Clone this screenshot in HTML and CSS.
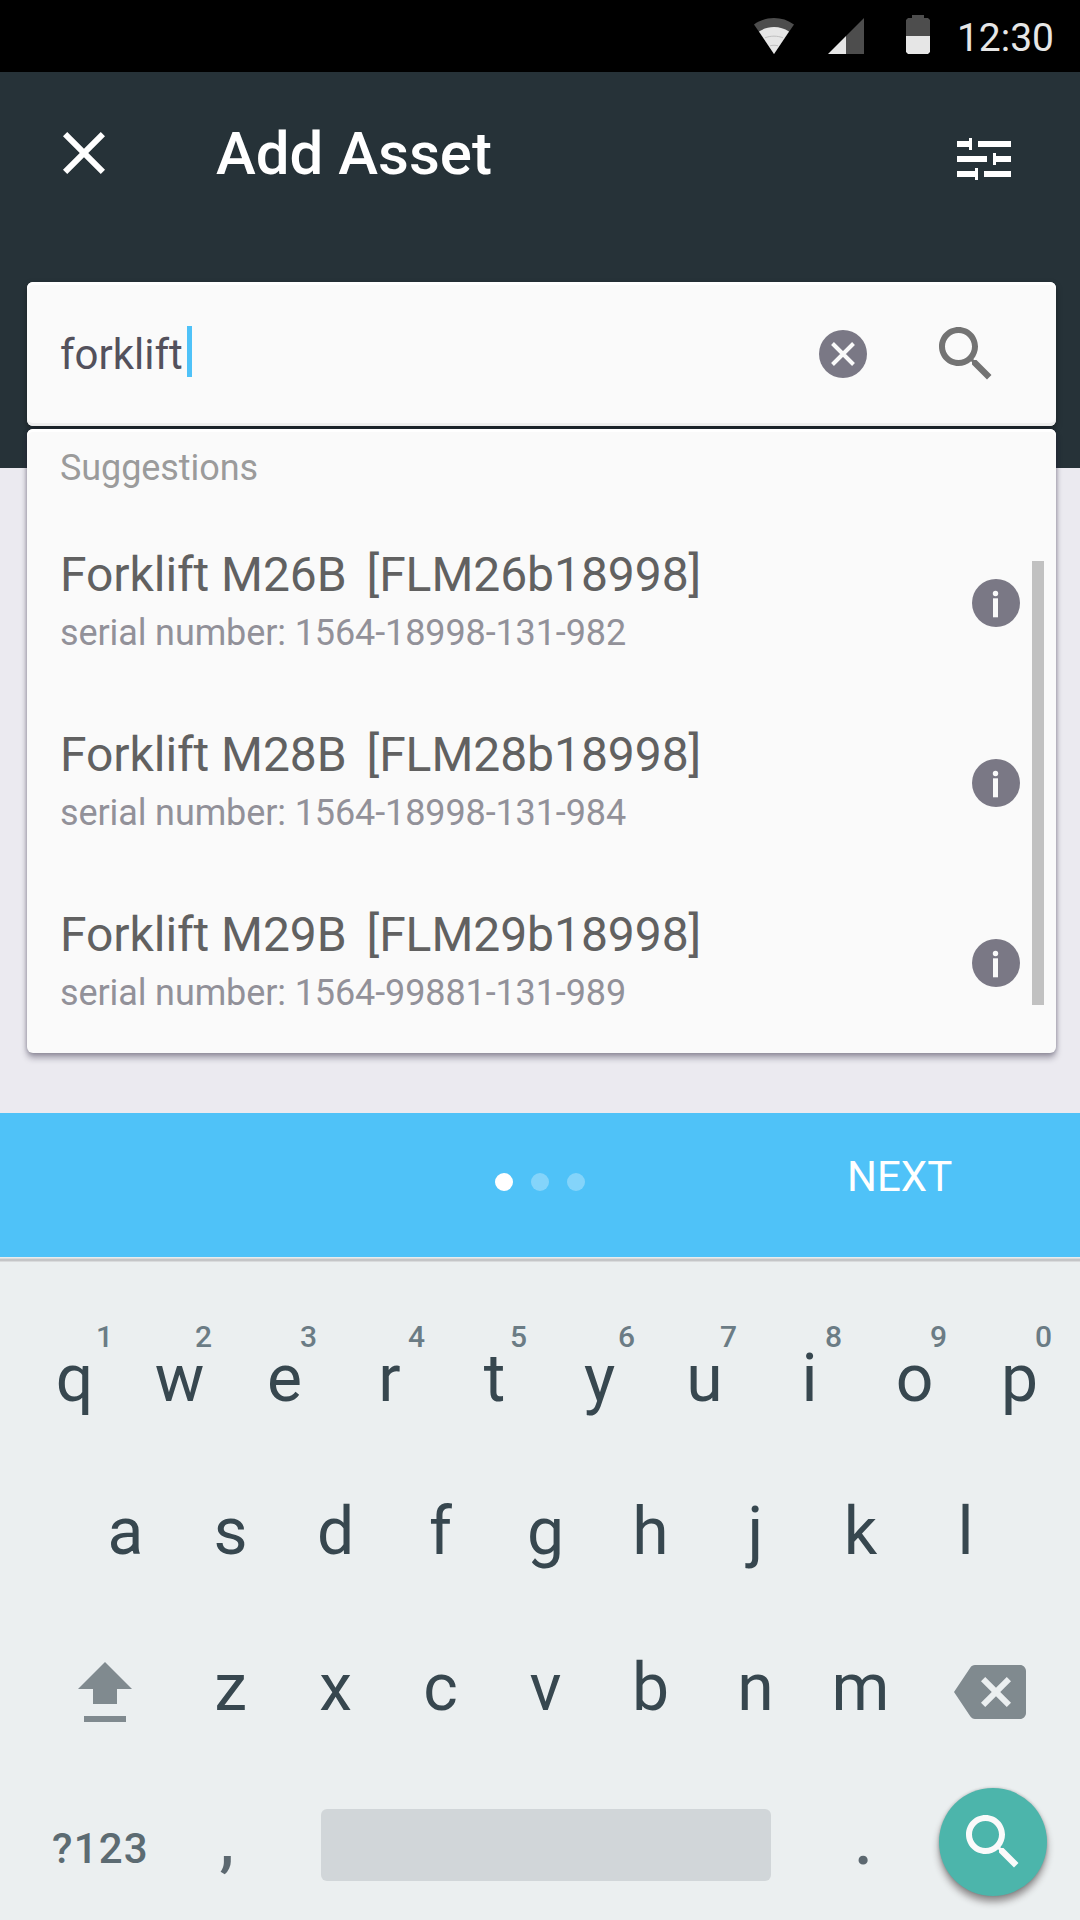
FILE: index.html
```html
<!DOCTYPE html>
<html lang="en">
<head>
<meta charset="utf-8">
<title>Add Asset</title>
<link rel="stylesheet" href="styles.css">
</head>
<body>
<div class="status-bar">
  <svg class="status-wifi" width="42" height="36" viewBox="0 0 42 36">
    <path class="dim" d="M1 6.4C7 2.200 13.800 0 21 0s14 2.200 20 6.400L21 36z"/>
    <path class="lit" d="M6 13.500C10.500 10.600 15.500 9 21 9s10.500 1.600 15 4.500L21 36z"/>
    <path class="arc" d="M12 19.800c5.500-2.200 12.500-2.200 18 0M17 27.800c2.500-.7 5.500-.7 8 0"/>
  </svg>
  <svg class="status-signal" width="36" height="36" viewBox="0 0 36 36">
    <path class="dim" d="M36 0v36H18V18z"/>
    <path class="lit" d="M18 18v18H0z"/>
  </svg>
  <svg class="status-battery" width="24" height="39" viewBox="0 0 24 39">
    <path class="dim" d="M6 0h12v3h4l2 2v16H0V5l2-2h4z"/>
    <path class="lit" d="M0 21h24v16l-2 2H2l-2-2z"/>
  </svg>
  <span class="clock">12:30</span>
</div>

<main class="screen">
  <header class="toolbar">
    <svg class="icon" viewBox="0 0 24 24"><path d="M19 6.410L17.590 5 12 10.590 6.410 5 5 6.410 10.590 12 5 17.590 6.410 19 12 13.410 17.590 19 19 17.590 13.410 12z"/></svg>
    <h1 class="title">Add Asset</h1>
    <svg class="tune" width="54" height="42" viewBox="0 0 54 42">
      <path d="M0 3h12V0h3v12h-3V9H0zM21 3h33v6H21zM0 18h30v6H0zM36 15h3v3h15v6H39v3h-3zM0 33h18v-3h3v12h-3v-3H0zM27 33h27v6H27z"/>
    </svg>
  </header>

  <div class="card search">
    <span class="query">forklift</span><span class="caret"></span>
    <svg class="clear" width="48" height="48" viewBox="0 0 48 48">
      <circle cx="24" cy="24" r="24"/>
      <path d="M13.500 13.500l21 21M34.500 13.500l-21 21"/>
    </svg>
    <svg class="icon search-icon" viewBox="0 0 24 24"><path d="M15.500 14h-.79l-.28-.27C15.410 12.590 16 11.110 16 9.500 16 5.910 13.090 3 9.500 3S3 5.910 3 9.500 5.910 16 9.500 16c1.610 0 3.090-.59 4.230-1.570l.27.28v.79l5 4.990L20.490 19l-4.990-5zm-6 0C7.010 14 5 11.990 5 9.500S7.010 5 9.500 5 14 7.010 14 9.500 11.990 14 9.500 14z"/></svg>
  </div>

  <div class="card suggestions">
    <div class="results">
      <h2 class="label">Suggestions</h2>
      <div class="result">
        <div>
          <div class="name">Forklift M26B <span class="tag">[FLM26b18998]</span></div>
          <div class="serial">serial number: 1564-18998-131-982</div>
        </div>
        <svg class="info" width="48" height="48" viewBox="0 0 48 48"><circle class="disc" cx="24" cy="24" r="24"/><circle cx="23.500" cy="14.500" r="2.700"/><path d="M21 19.300h5v19h-5z"/></svg>
      </div>
      <div class="result">
        <div>
          <div class="name">Forklift M28B <span class="tag">[FLM28b18998]</span></div>
          <div class="serial">serial number: 1564-18998-131-984</div>
        </div>
        <svg class="info" width="48" height="48" viewBox="0 0 48 48"><circle class="disc" cx="24" cy="24" r="24"/><circle cx="23.500" cy="14.500" r="2.700"/><path d="M21 19.300h5v19h-5z"/></svg>
      </div>
      <div class="result">
        <div>
          <div class="name">Forklift M29B <span class="tag">[FLM29b18998]</span></div>
          <div class="serial">serial number: 1564-99881-131-989</div>
        </div>
        <svg class="info" width="48" height="48" viewBox="0 0 48 48"><circle class="disc" cx="24" cy="24" r="24"/><circle cx="23.500" cy="14.500" r="2.700"/><path d="M21 19.300h5v19h-5z"/></svg>
      </div>
    </div>
    <div class="scrollbar"></div>
  </div>
</main>

<nav class="stepper">
  <div class="dots"><span class="dot active"></span><span class="dot"></span><span class="dot"></span></div>
  <span class="next">NEXT</span>
</nav>

<div class="keyboard">
  <div class="row row-top">
    <span class="key">q<sup class="hint one">1</sup></span>
    <span class="key">w<sup class="hint">2</sup></span>
    <span class="key">e<sup class="hint">3</sup></span>
    <span class="key">r<sup class="hint far">4</sup></span>
    <span class="key">t<sup class="hint">5</sup></span>
    <span class="key">y<sup class="hint far">6</sup></span>
    <span class="key">u<sup class="hint">7</sup></span>
    <span class="key">i<sup class="hint">8</sup></span>
    <span class="key">o<sup class="hint">9</sup></span>
    <span class="key">p<sup class="hint">0</sup></span>
  </div>
  <div class="row row-home">
    <span class="key">a</span><span class="key">s</span><span class="key">d</span><span class="key">f</span><span class="key">g</span><span class="key">h</span><span class="key">j</span><span class="key">k</span><span class="key">l</span>
  </div>
  <div class="row row-low">
    <svg class="shift" width="54" height="60" viewBox="0 0 54 60"><path d="M27 0l27 27H39v15H15V27H0zM6 54h42v6H6z"/></svg>
    <span class="key">z</span><span class="key">x</span><span class="key">c</span><span class="key">v</span><span class="key">b</span><span class="key">n</span><span class="key">m</span>
    <svg class="icon backspace" viewBox="0 0 24 24"><path d="M22 3H7c-.69 0-1.230.35-1.590.88L0 12l5.410 8.110c.36.53.9.89 1.590.89h15c1.100 0 2-.9 2-2V5c0-1.100-.9-2-2-2zm-3 12.590L17.590 17 14 13.410 10.410 17 9 15.590 12.590 12 9 8.410 10.410 7 14 10.590 17.590 7 19 8.410 15.410 12 19 15.590z"/></svg>
  </div>
  <div class="row row-bottom">
    <span class="symbols">?123</span>
    <span class="punct comma">,</span>
    <span class="space"></span>
    <span class="punct period">.</span>
    <span class="go"><svg class="icon" viewBox="0 0 24 24"><path d="M15.500 14h-.79l-.28-.27C15.410 12.590 16 11.110 16 9.500 16 5.910 13.090 3 9.500 3S3 5.910 3 9.500 5.910 16 9.500 16c1.610 0 3.090-.59 4.230-1.570l.27.28v.79l5 4.990L20.490 19l-4.990-5zm-6 0C7.010 14 5 11.990 5 9.500S7.010 5 9.500 5 14 7.010 14 9.500 11.990 14 9.500 14z"/></svg></span>
  </div>
</div>
</body>
</html>
```

FILE: styles.css
```css
* { box-sizing: border-box; }

body {
  margin: 0;
  width: 1080px;
  height: 1920px;
  overflow: hidden;
  display: flex;
  flex-direction: column;
  font-family: Roboto, "Liberation Sans", sans-serif;
  background: #ebeaf0;
}

svg { display: block; flex: none; }
.icon { width: 72px; height: 72px; }

/* Status bar */
.status-bar {
  height: 72px;
  flex: none;
  display: flex;
  align-items: center;
  justify-content: flex-end;
  padding-right: 26px;
  background: #000;
}
.status-bar .dim { fill: #4d4d4d; }
.status-bar .lit { fill: #e6e6e6; }
.status-bar .arc { fill: none; stroke: #b5b5b5; stroke-width: 0.8; }
.status-wifi { margin-right: 33px; }
.status-signal { margin-right: 42px; }
.status-battery { margin: 0 0 3px; }
.clock {
  width: 124px;
  text-align: right;
  color: #e6e6e6;
  font-size: 39px;
  line-height: 72px;
  padding-top: 3px;
}

/* Header and search */
.screen {
  height: 1041px;
  flex: none;
  padding: 0 24px 0 27px;
  background: linear-gradient(#263238 396px, #ebeaf0 396px);
}
.toolbar {
  height: 162px;
  margin-bottom: 48px;
  padding: 0 45px 0 21px;
  display: flex;
  align-items: center;
  fill: #fff;
}
.title {
  flex: 1;
  margin: 2px 0 0 96px;
  font-size: 60px;
  font-weight: 500;
  line-height: 162px;
  color: #fff;
}
.tune { margin-top: 12px; }

.card {
  display: flex;
  border-radius: 6px;
  background: #fafafa;
}
.search {
  height: 144px;
  align-items: center;
  padding: 0 54px 0 33px;
  box-shadow: inset 0 3px 0 #fff, inset 0 -3px 0 #eee, 0 3px 6px rgba(0, 0, 0, 0.35);
}
.query {
  margin-top: 2px;
  font-size: 42px;
  line-height: 144px;
  color: #53515c;
}
.caret {
  width: 5px;
  height: 51px;
  margin: 0 auto 5px 4px;
  background: #4fc2f8;
}
.clear { fill: #7a7885; stroke: none; }
.clear path { stroke: #fafafa; stroke-width: 4; }
.search-icon { margin-left: 63px; fill: #737373; }

.suggestions {
  height: 624px;
  margin-top: 3px;
  box-shadow: inset 0 3px 0 #fff, 0 5px 6px rgba(30, 25, 50, 0.36), 0 0 4px rgba(30, 25, 50, 0.28);
}
.results { flex: 1; padding-left: 33px; }
.label {
  margin: 0;
  padding-top: 9px;
  height: 84px;
  font-size: 36px;
  font-weight: 400;
  line-height: 60px;
  letter-spacing: -0.08px;
  color: #9b9b9b;
}
.result {
  height: 180px;
  display: flex;
  justify-content: space-between;
  padding-top: 30px;
}
.name {
  font-size: 48px;
  line-height: 64px;
  letter-spacing: -0.06px;
  color: #616161;
  white-space: nowrap;
}
.tag { margin-left: 8px; }
.serial {
  margin-top: 2px;
  font-size: 36px;
  line-height: 48px;
  letter-spacing: -0.11px;
  color: #929199;
}
.info { margin-top: 36px; fill: #fafafa; }
.info .disc { fill: #7a7885; }
.scrollbar {
  width: 12px;
  height: 444px;
  margin: 132px 12px 0;
  background: #c1c1c1;
}

/* Stepper */
.stepper {
  height: 144px;
  flex: none;
  display: grid;
  grid-template-columns: 1fr 90px 1fr;
  align-items: center;
  background: #4fc2f8;
}
.dots {
  grid-column: 2;
  display: flex;
  gap: 18px;
  justify-content: center;
  margin-top: -6px;
}
.dot {
  width: 18px;
  height: 18px;
  border-radius: 50%;
  background: rgba(255, 255, 255, 0.3);
}
.dot.active { background: #fff; }
.next {
  padding-left: 262px;
  margin-top: -18px;
  font-size: 42px;
  color: #fff;
}

/* Keyboard */
.keyboard {
  flex: 1;
  padding-top: 47px;
  background: linear-gradient(#e8ecee 1px, #d9dbdc 1px 2px, #c4c5c7 2px 4px, #d9dbdc 4px 5px, #ebeff0 5px);
}
.row { display: flex; align-items: center; height: 156px; }
.key {
  position: relative;
  width: 105px;
  text-align: center;
  font-size: 66px;
  line-height: 150px;
  color: #37474f;
}
.row-top { height: 150px; padding-left: 22px; }
.row-home { padding-left: 73px; }
.row-low { padding-left: 78px; }
.hint {
  position: absolute;
  top: 16px;
  left: 68px;
  font-size: 30px;
  font-weight: 500;
  line-height: 34px;
  color: #6b7c85;
}
.hint.far { left: 71px; }
.hint.one { left: 74px; }
.shift { margin: 8px 46px 0 0; fill: #808a8f; }
.backspace { margin: 8px 0 0 41px; fill: #808a8f; }

.row-bottom { height: 154px; padding-top: 4px; }
.symbols {
  width: 200px;
  padding: 7px 0 0 52px;
  font-size: 42px;
  font-weight: 500;
  letter-spacing: 1.2px;
  color: #5c6b72;
}
.punct {
  padding-bottom: 7px;
  font-size: 66px;
  font-weight: 500;
  text-align: center;
  color: #5c6870;
}
.comma { width: 54px; margin-right: 67px; }
.period { width: 168px; padding-left: 17px; }
.space {
  width: 450px;
  height: 72px;
  border-radius: 6px;
  background: #d1d6d9;
}
.go {
  width: 108px;
  height: 108px;
  margin-bottom: 6px;
  padding: 18px;
  border-radius: 50%;
  background: #4cb5ab;
  fill: #fafafa;
  box-shadow: 0 6px 7px rgba(40, 30, 30, 0.45), 0 0 3px rgba(40, 30, 30, 0.25);
}
```
